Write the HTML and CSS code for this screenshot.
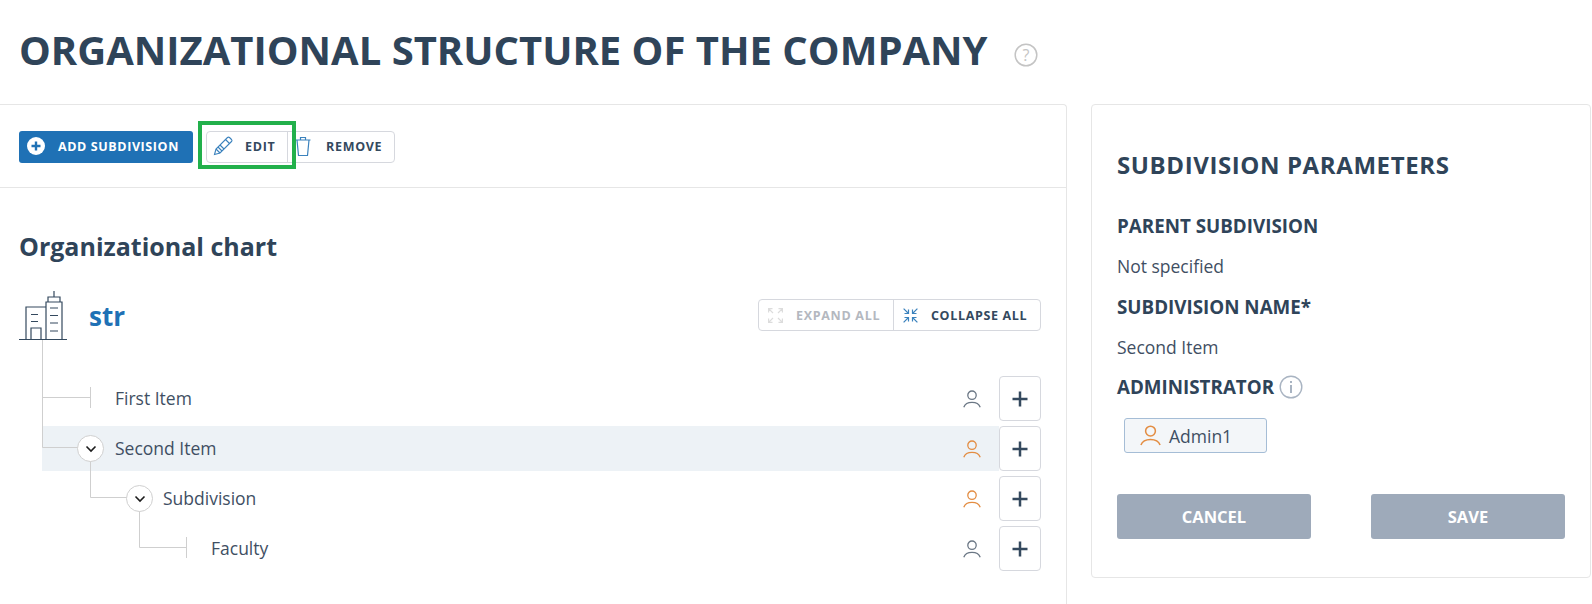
FILE: index.html
```html
<!DOCTYPE html>
<html lang="en">
<head>
<meta charset="utf-8">
<title>Organizational structure</title>
<link rel="stylesheet" href="styles.css">
</head>
<body>
<svg class="defs" width="0" height="0" aria-hidden="true">
  <symbol id="user" viewBox="0 0 18 18"><circle cx="9" cy="5.2" r="4.2" fill="none" stroke="currentColor" stroke-width="1.3"/><path d="M.8 17.2C2 13.800 5 12.400 9 12.400s7 1.400 8.200 4.800" fill="none" stroke="currentColor" stroke-width="1.300"/></symbol>
  <symbol id="plus" viewBox="0 0 16 16"><path d="M8 .5v15M.5 8h15" fill="none" stroke="currentColor" stroke-width="2.500"/></symbol>
  <symbol id="chev" viewBox="0 0 12 8"><path d="M1.500 1.500 6 6l4.500-4.500" fill="none" stroke="currentColor" stroke-width="1.600"/></symbol>
</svg>
<header class="page-head">
  <h1>Organizational structure of the company</h1>
  <svg class="help" width="24" height="24" viewBox="0 0 24 24"><circle cx="12" cy="12" r="10.800" fill="none" stroke="#c4c4c4" stroke-width="1.500"/><text x="12" y="17.500" text-anchor="middle" class="help-mark">?</text></svg>
</header>
<main class="layout">
  <section class="panel-left">
    <div class="toolbar">
      <button class="btn-primary">
        <svg width="18" height="18" viewBox="0 0 18 18"><circle cx="9" cy="9" r="9" fill="#fff"/><path d="M9 4.500v9M4.500 9h9" stroke="#1f71b5" stroke-width="2.400"/></svg>
        Add subdivision
      </button>
      <div class="btn-group">
        <button class="btn-ghost btn-edit">
          <svg width="20" height="20" viewBox="0 0 20 20" fill="none" stroke="#3b82bd" stroke-width="1.100"><path d="M1.500 18.500 3 13 14.500 1.500a1.500 1.500 0 0 1 2 0l2 2a1.500 1.500 0 0 1 0 2L7 17Z"/><path d="M3 13l4 4M5 11l4 4M7 9l4 4M12.500 3.500l4 4"/></svg>
          Edit
          <span class="highlight"></span>
        </button>
        <button class="btn-ghost btn-remove">
          <svg width="16" height="22" viewBox="0 0 16 22" fill="none" stroke="#3b82bd" stroke-width="1.200"><path d="M.5 5h15M5.500 5V2.500h5V5M2 5l1.500 15.500h9L14 5"/></svg>
          Remove
        </button>
      </div>
    </div>
    <div class="chart">
      <h2>Organizational chart</h2>
      <div class="chart-head">
        <svg class="building" width="48" height="50" viewBox="0 0 48 50" fill="none" stroke="#34495e" stroke-width="1.200"><path d="M0 48.500h48M7 48.500V16h20M27 48.500V11h16v37.500M29 11V6h12v5M35 6V0M12 23.500h7M12 30.500h7M31 17h8M31 24.500h8M31 32h8M31 40h8M12 48.500V37h10v11.500"/></svg>
        <span class="root-name">str</span>
        <div class="btn-group expand-group">
          <button class="btn-ghost btn-expand">
            <svg width="15" height="15" viewBox="0 0 15 15" fill="none" stroke="#dcdcdc" stroke-width="1.200"><path d="M.6.6 5 5M.6 4.500V.6h3.900M14.400.6 10 5M14.400 4.500V.6h-3.900M.6 14.400 5 10M.6 10.500v3.900h3.900M14.400 14.400 10 10M14.400 10.500v3.900h-3.900"/></svg>
            Expand all
          </button>
          <button class="btn-ghost btn-collapse">
            <svg width="15" height="15" viewBox="0 0 15 15" fill="none" stroke="#3b82bd" stroke-width="1.200"><path d="M.6.6 5.500 5.500M1.500 5.500h4v-4M14.400.6 9.500 5.500M13.500 5.500h-4v-4M.6 14.400l4.900-4.900M1.500 9.500h4v4M14.400 14.400 9.500 9.500M13.500 9.500h-4v4"/></svg>
            Collapse all
          </button>
        </div>
      </div>
      <div class="tree">
        <svg class="tree-lines" width="200" height="232" viewBox="0 0 200 232" fill="none" stroke="#cfcfcf"><path d="M42.500 0V107.500H78M42.500 57.500H90.500M90.500 47V68M90.500 120V157.500H127M139.500 170V207.500H186.500M186.500 197V218"/></svg>
        <div class="row">
          <div class="row-body depth-1 no-toggle"><span class="label">First Item</span><svg class="user"><use href="#user"/></svg></div>
          <button class="add"><svg width="16" height="16"><use href="#plus"/></svg></button>
        </div>
        <div class="row">
          <div class="row-body depth-1 selected"><span class="toggle"><svg width="12" height="8"><use href="#chev"/></svg></span><span class="label">Second Item</span><svg class="user active"><use href="#user"/></svg></div>
          <button class="add"><svg width="16" height="16"><use href="#plus"/></svg></button>
        </div>
        <div class="row">
          <div class="row-body depth-2"><span class="toggle"><svg width="12" height="8"><use href="#chev"/></svg></span><span class="label">Subdivision</span><svg class="user active"><use href="#user"/></svg></div>
          <button class="add"><svg width="16" height="16"><use href="#plus"/></svg></button>
        </div>
        <div class="row">
          <div class="row-body depth-3 no-toggle"><span class="label">Faculty</span><svg class="user"><use href="#user"/></svg></div>
          <button class="add"><svg width="16" height="16"><use href="#plus"/></svg></button>
        </div>
      </div>
    </div>
  </section>
  <aside class="panel-right">
    <h3>Subdivision parameters</h3>
    <h4>Parent subdivision</h4>
    <p>Not specified</p>
    <h4>Subdivision name*</h4>
    <p>Second Item</p>
    <h4 class="with-info">Administrator
      <svg width="24" height="24" viewBox="0 0 24 24"><circle cx="12" cy="12" r="10.800" fill="none" stroke="#a9b4c2" stroke-width="1.400"/><path d="M12 10v8M12 6v2" stroke="#a9b4c2" stroke-width="2"/></svg>
    </h4>
    <div class="chip"><svg class="user active"><use href="#user"/></svg>Admin1</div>
    <div class="actions">
      <button class="btn-muted">Cancel</button>
      <button class="btn-muted">Save</button>
    </div>
  </aside>
</main>
</body>
</html>
```
FILE: styles.css
```css
* { box-sizing: border-box; }
html, body { margin: 0; padding: 0; }
body {
  width: 1592px;
  height: 604px;
  overflow: hidden;
  background: #fff;
  color: #34495e;
  font-family: "Open Sans", "Noto Sans", sans-serif;
}
button { font-family: inherit; cursor: pointer; }
.defs { position: absolute; }

.page-head {
  height: 104px;
  padding: 0 0 4px 19px;
  display: flex;
  align-items: center;
  gap: 26px;
}
h1 {
  margin: 0;
  font-size: 40px;
  line-height: 54px;
  font-weight: 700;
  text-transform: uppercase;
  color: #2f4459;
}
.help { flex: none; margin-top: 10px; }
.help-mark { font-size: 16px; fill: #c4c4c4; font-family: "Open Sans", sans-serif; }

.layout { display: flex; align-items: flex-start; gap: 24px; }

.panel-left {
  width: 1067px;
  height: 500px;
  flex: none;
  border-top: 1px solid #e6e6e6;
  border-right: 1px solid #e6e6e6;
  border-top-right-radius: 4px;
}
.toolbar {
  height: 83px;
  padding: 26px 19px 0;
  display: flex;
  align-items: flex-start;
  gap: 13px;
  border-bottom: 1px solid #e6e6e6;
}
.btn-primary {
  width: 174px;
  height: 32px;
  display: flex;
  align-items: center;
  gap: 13px;
  padding: 0 0 2px 8px;
  border: 0;
  border-radius: 3px;
  background: #1f71b5;
  color: #fff;
  font-size: 12.500px;
  font-weight: 700;
  letter-spacing: 0.6px;
  text-transform: uppercase;
  white-space: nowrap;
}
.btn-group {
  display: flex;
  height: 32px;
  border: 1px solid #d6d8de;
  border-radius: 4px;
  background: #fff;
}
.btn-ghost {
  height: 100%;
  display: flex;
  align-items: center;
  border: 0;
  background: none;
  padding: 0 0 2px;
  color: #34495e;
  font-size: 12.500px;
  font-weight: 700;
  letter-spacing: 0.7px;
  text-transform: uppercase;
  white-space: nowrap;
}
.btn-edit { width: 81px; padding-left: 6px; gap: 12px; position: relative; border-right: 1px solid #d6d8de; }
.btn-remove { width: 106px; padding-left: 7px; gap: 15px; }
.highlight {
  position: absolute;
  left: -9px;
  top: -11px;
  width: 98px;
  height: 48px;
  border: 4px solid #22b04b;
}

.chart { padding: 0 25px 0 19px; }
h2 {
  margin: 0;
  padding-top: 42px;
  font-size: 25px;
  line-height: 33px;
  font-weight: 700;
  color: #2f4459;
}
.chart-head {
  display: flex;
  align-items: center;
  height: 50px;
  margin-top: 28px;
}
.building { flex: none; }
.root-name {
  margin-left: 22px;
  font-size: 26px;
  font-weight: 700;
  color: #1f71b5;
}
.expand-group { margin-left: auto; margin-top: -3px; }
.expand-group .btn-ghost { padding-top: 1px; padding-bottom: 0; }
.btn-expand { width: 135px; padding-left: 9px; gap: 13px; color: #b4b8bf; border-right: 1px solid #d6d8de; }
.expand-group .btn-expand { padding-left: 9px; }
.expand-group .btn-collapse { padding-left: 9px; gap: 13px; width: 146px; letter-spacing: 0.65px; }

.tree {
  position: relative;
  margin: 35px 0 0 -19px;
  display: flex;
  flex-direction: column;
  gap: 5px;
}
.tree-lines { position: absolute; left: 0; top: -36px; pointer-events: none; }
.row { display: flex; height: 45px; padding-left: 42px; }
.row-body {
  flex: 1;
  display: flex;
  align-items: center;
  padding-right: 18px;
}
.row-body.selected { background: #edf2f6; }
.depth-1 { padding-left: 35px; }
.depth-2 { padding-left: 84px; }
.depth-3 { padding-left: 133px; }
.no-toggle .label { margin-left: 38px; }
.depth-3.no-toggle .label { margin-left: 36px; }
.toggle {
  position: relative;
  flex: none;
  width: 27px;
  height: 27px;
  display: flex;
  align-items: center;
  justify-content: center;
  border: 1px solid #d0d0d0;
  border-radius: 50%;
  background: #fff;
  color: #1c1c1c;
}
.label { margin: 0 0 1px 11px; font-size: 17.500px; color: #3f4f63; }
.depth-2 .label { margin-left: 10px; }
.user { width: 18px; height: 18px; margin-left: auto; color: #6b7785; flex: none; }
.user.active { color: #e38d43; }
.add {
  flex: none;
  width: 42px;
  height: 45px;
  display: flex;
  align-items: center;
  justify-content: center;
  padding: 0;
  border: 1px solid #d6d8de;
  border-radius: 4px;
  background: #fff;
  color: #34495e;
}

.panel-right {
  width: 500px;
  height: 474px;
  flex: none;
  padding: 43px 25px 0 25px;
  border: 1px solid #e6e6e6;
  border-radius: 4px;
}
h3 {
  margin: 0 0 30px;
  font-size: 24px;
  line-height: 33px;
  font-weight: 700;
  letter-spacing: 0.6px;
  text-transform: uppercase;
  color: #2f4459;
}
h4 {
  margin: 0;
  font-size: 18.800px;
  line-height: 30px;
  font-weight: 700;
  text-transform: uppercase;
  color: #2f4459;
}
.panel-right p {
  margin: 10px 0 10.500px;
  font-size: 17.500px;
  line-height: 30px;
  color: #3f4f63;
}
.with-info { display: flex; align-items: center; gap: 5px; }
.chip {
  width: 143px;
  height: 35px;
  margin: 16px 0 0 7px;
  padding-left: 15px;
  display: flex;
  align-items: center;
  gap: 8px;
  border: 1px solid #a5bdd6;
  border-radius: 3px;
  background: #f3f6f9;
  font-size: 17.500px;
  color: #3f4f63;
}
.chip .user { margin-left: 0; width: 21px; height: 21px; }
.actions { display: flex; justify-content: space-between; margin-top: 41px; }
.btn-muted {
  width: 194px;
  height: 45px;
  border: 0;
  border-radius: 3px;
  background: #9eaaba;
  color: #fff;
  font-size: 16.500px;
  font-weight: 700;
  text-transform: uppercase;
}
```
